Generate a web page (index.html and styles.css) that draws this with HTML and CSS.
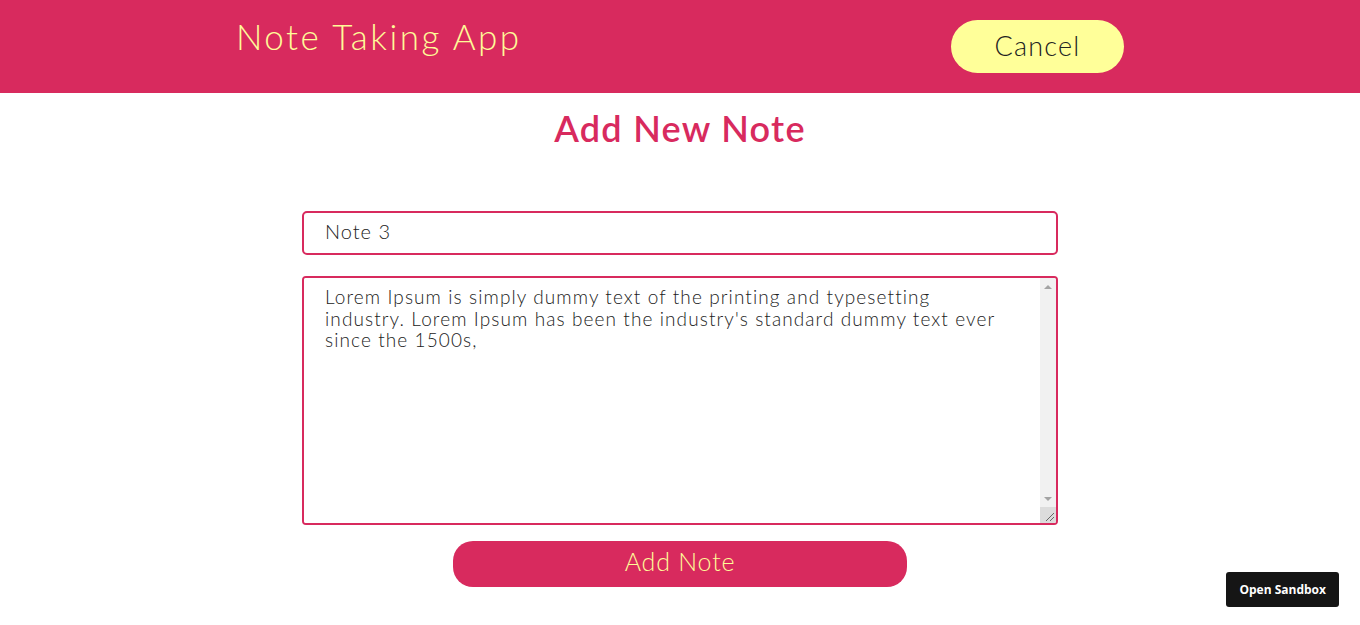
FILE: index.html
```html
<!DOCTYPE html>
<html lang="en">
  <head>
    <meta charset="UTF-8" />
    <meta name="viewport" content="width=device-width, initial-scale=1.0" />
    <title>Note Taking App</title>
    <link rel="stylesheet" href="styles.css">
  </head>
  <body>
    <header class="app-header">
      <div class="header-inner">
        <h1 class="app-title">Note Taking App</h1>
        <button type="button" class="cancel-button">Cancel</button>
      </div>
    </header>
    <main class="note-form">
      <h2 class="form-title">Add New Note</h2>
      <input type="text" class="note-title" id="noteTitle" value="Note 3" />
      <div class="body-box">
        <textarea class="note-body" id="noteBody">Lorem Ipsum is simply dummy text of the printing and typesetting industry. Lorem Ipsum has been the industry's standard dummy text ever since the 1500s,</textarea>
        <div class="scrollbar">
          <span class="scroll-btn">
            <svg width="8" height="4" viewBox="0 0 8 4"><path d="M0 4 L4 0 L8 4 Z" fill="#a3a3a3"/></svg>
          </span>
          <span class="scroll-track"></span>
          <span class="scroll-btn">
            <svg width="8" height="4" viewBox="0 0 8 4"><path d="M0 0 L8 0 L4 4 Z" fill="#a3a3a3"/></svg>
          </span>
          <span class="scroll-grip">
            <svg width="16" height="16" viewBox="0 0 16 16"><path d="M14 6 L6 14 M14 10 L10 14" stroke="#666" stroke-width="1"/></svg>
          </span>
        </div>
      </div>
      <button type="button" class="add-button">Add Note</button>
    </main>
    <a class="sandbox-badge" href="#">Open Sandbox</a>
  </body>
</html>
```

FILE: styles.css
```css
body {
  margin: 0;
  background-color: #fff;
  font-family: Lato, "Open Sans", sans-serif;
}

.app-header {
  background-color: #d82a5e;
  height: 93px;
}

.header-inner {
  width: 888px;
  margin: 0 auto;
  display: flex;
  justify-content: space-between;
  align-items: flex-start;
}

.app-title {
  margin: 0;
  padding-top: 15px;
  color: #fffb98;
  font-size: 35px;
  font-weight: 300;
  letter-spacing: 2.5px;
}

.cancel-button {
  margin-top: 20px;
  width: 173px;
  height: 53px;
  padding: 0 0 2px;
  background-color: #ffff99;
  color: #222;
  border: none;
  border-radius: 27px;
  font-family: inherit;
  font-size: 27px;
  font-weight: 300;
  letter-spacing: 1.2px;
  cursor: pointer;
}

.note-form {
  width: 756px;
  margin: 0 auto;
  display: flex;
  flex-direction: column;
  align-items: center;
}

.form-title {
  margin: 13px 0 0;
  height: 105px;
  color: #d82a5e;
  font-size: 36px;
  font-weight: 600;
  letter-spacing: 1.3px;
}

.note-title {
  box-sizing: border-box;
  width: 100%;
  height: 44px;
  border: 2px solid #d82a5e;
  border-radius: 5px;
  padding: 0 0 4px 21px;
  font-family: inherit;
  font-size: 20px;
  font-weight: 300;
  letter-spacing: 1px;
  color: #222;
  outline: none;
}

.body-box {
  box-sizing: border-box;
  width: 100%;
  height: 249px;
  margin-top: 21px;
  display: flex;
  border: 2px solid #d82a5e;
  border-radius: 4px;
  overflow: hidden;
}

.note-body {
  flex: 1;
  border: none;
  padding: 8px 30px 0 21px;
  font-family: inherit;
  font-size: 19px;
  font-weight: 300;
  line-height: 21.5px;
  letter-spacing: 1.1px;
  color: #222;
  resize: none;
  outline: none;
}

.scrollbar {
  width: 16px;
  display: flex;
  flex-direction: column;
  background-color: #f1f1f1;
}

.scroll-btn {
  height: 17px;
  display: flex;
  justify-content: center;
  align-items: center;
}

.scroll-track {
  flex: 1;
}

.scroll-grip {
  height: 16px;
  display: block;
  background-color: #dcdcdc;
}

.scroll-grip svg {
  display: block;
}

.add-button {
  margin-top: 16px;
  width: 454px;
  height: 46px;
  padding: 0 0 6px;
  background-color: #d82a5e;
  color: #fffb98;
  border: none;
  border-radius: 20px;
  font-family: inherit;
  font-size: 25px;
  font-weight: 300;
  letter-spacing: 0.8px;
  cursor: pointer;
}

.sandbox-badge {
  position: fixed;
  right: 21px;
  bottom: 18px;
  padding: 9px 13px;
  background-color: #151515;
  color: #fff;
  border-radius: 3px;
  font-family: "Open Sans", sans-serif;
  font-size: 12px;
  font-weight: 700;
  text-decoration: none;
}
```
